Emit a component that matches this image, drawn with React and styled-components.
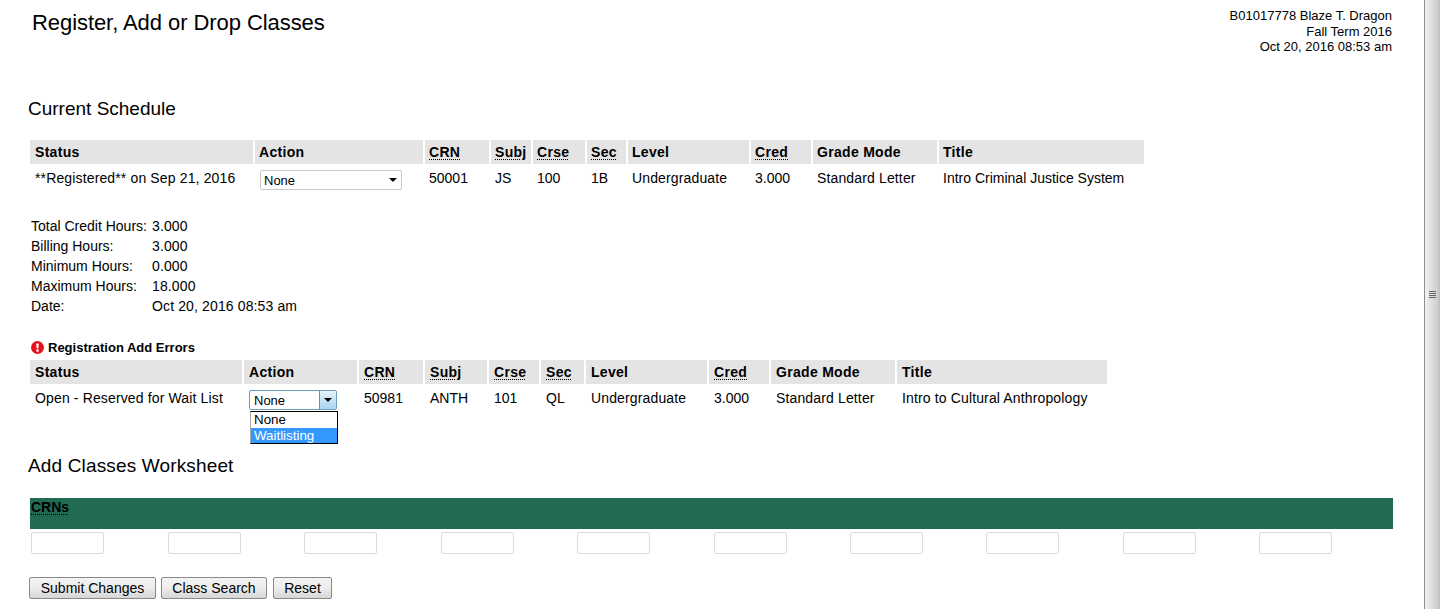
import React from "react";
import styled, { createGlobalStyle } from "styled-components";

const Global = createGlobalStyle`
  html, body { margin: 0; padding: 0; height: 609px; overflow: hidden; background: #fff; }
  body { font-family: "Liberation Sans", Arial, sans-serif; font-size: 14px; color: #000; }
`;
const Shell = styled.div`display: flex; width: 1440px; height: 609px; overflow: hidden;`;
const Content = styled.main`width: 1424px; flex: none; padding-left: 30px; box-sizing: border-box;`;
const TopRow = styled.header`display: flex; justify-content: space-between; height: 99px; padding-right: 32px;`;
const PageTitle = styled.h1`margin: 11px 0 0 2px; font-size: 22px; line-height: 24px; font-weight: 400; letter-spacing: -.07px;`;
const Identity = styled.div`margin-top: 8px; font-size: 13px; line-height: 15.5px; text-align: right;`;
const SectionTitle = styled.h2`margin: 0 0 21px -2px; font-size: 19px; line-height: 20px; font-weight: 400;`;
const Row = styled.div`
  display: grid; grid-template-columns: ${p => p.$cols}; column-gap: 2px; width: ${p => p.$width}px;
  & > * { padding-left: ${p => p.$pad}px; }
  & > :first-child { padding-left: 5px; }
`;
const Head = styled.div`height: 24px; background: #e4e4e4; font-weight: 700; line-height: 24px; letter-spacing: .3px; box-sizing: border-box;`;
const Abbr = styled.abbr`text-decoration: underline dotted #000; text-decoration-thickness: 1px; text-underline-offset: 2px;`;
const Cell = styled.div`height: 28px; line-height: 28px; box-sizing: border-box; white-space: nowrap; position: relative; ${p => p.$wide && "letter-spacing: .14px;"}`;
const Select = styled.div`
  position: relative; width: ${p => p.$w}px; height: 20px; margin: 6px 0 0 ${p => p.$ml}px; box-sizing: border-box;
  border: 1px solid ${p => p.$open ? "#6d9dbf" : "#c9c9c9"}; border-radius: 2px; background: #fff;
  font-size: 13px; line-height: 20px; padding-left: ${p => p.$open ? 4 : 3}px;
`;
const ArrowBox = styled.span`
  position: absolute; right: 0; top: 0; bottom: 0; width: 16px; display: flex; align-items: center; justify-content: center;
  ${p => p.$open && "background: linear-gradient(#e6f3fb, #a7d5ef); border-left: 1px solid #5e8fb3;"}
`;
const Arrow = styled.i`display: block; width: 0; height: 0; border: 4px solid transparent; border-top-color: #000; border-bottom: 0;`;
const Menu = styled.div`
  position: absolute; left: 0; top: 20px; width: 88px; height: 33px; background: #fff; border: 1px solid #000; border-left-color: #a9a9a9;
  box-sizing: border-box; font-size: 13.33px; line-height: 16px; z-index: 2; overflow: hidden;
`;
const MenuItem = styled.div`height: 16px; padding-left: 3px; ${p => p.$active && "background: #3399ff; color: #fff;"}`;
const Summary = styled.dl`display: grid; grid-template-columns: 121px auto; justify-content: start; margin: 24px 0 0 1px; line-height: 20px;`;
const Term = styled.dt`margin: 0;`;
const Desc = styled.dd`margin: 0; letter-spacing: .13px;`;
const ErrorTitle = styled.div`display: flex; align-items: center; gap: 4px; height: 20px; margin: 21px 0 3px 1px; font-size: 13px; font-weight: 700;`;
const WorksheetTitle = styled(SectionTitle)`margin-top: 44px; margin-bottom: 22px; letter-spacing: .15px;`;
const GreenBar = styled.div`
  width: 1363px; height: 31px; background: #206b52; padding-left: 1px; box-sizing: border-box;
  font-weight: 700; line-height: 18px; color: #000;
`;
const Inputs = styled.div`display: grid; grid-template-columns: repeat(10, 136.47px); margin: 3px 0 0 1.2px;`;
const Input = styled.div`width: 73px; height: 22px; box-sizing: border-box; border: 1px solid #dcdcdc; border-radius: 2px; background: #fff;`;
const Buttons = styled.div`display: flex; gap: 5px; margin: 23px 0 0 -1px;`;
const Button = styled.button`
  height: 22px; padding: 0; width: ${p => p.$w}px; margin-left: ${p => p.$ml || 0}px; box-sizing: border-box; border: 1px solid #8a8a8a; border-radius: 2px;
  background: linear-gradient(#f4f4f4, #ececec 50%, #d6d6d6); font: 14px "Liberation Sans", Arial, sans-serif; color: #000;
`;
const Scrollbar = styled.aside`
  width: 16px; height: 609px; flex: none; box-sizing: border-box; border-left: 1px solid #8d8d8d; border-right: 1px solid #bdbdbd;
  background: linear-gradient(90deg, #f2f2f2, #dcdcdc 55%, #c9c9c9); display: flex; flex-direction: column; align-items: center; justify-content: center; gap: 1px;
  padding-bottom: 21px;
`;
const Grip = styled.i`display: block; width: 7px; height: 1px; background: #666;`;

const heads = ["Status", "Action", "CRN", "Subj", "Crse", "Sec", "Level", "Cred", "Grade Mode", "Title"];
const abbreviated = new Set(["CRN", "Subj", "Crse", "Sec", "Cred"]);

function HeadRow({ cols, width, pad }) {
  return (
    <Row $cols={cols} $width={width} $pad={pad}>
      {heads.map(h => <Head key={h}>{abbreviated.has(h) ? <Abbr>{h}</Abbr> : h}</Head>)}
    </Row>
  );
}

const ErrorIcon = () => (
  <svg width="13" height="13" viewBox="0 0 13 13" aria-hidden="true">
    <circle cx="6.5" cy="6.5" r="6.5" fill="#e8101a" />
    <path d="M5.1 2.6h2.8L7.3 7.6H5.7z" fill="#fff" />
    <circle cx="6.5" cy="9.6" r="1.3" fill="#fff" />
  </svg>
);

const cols1 = "223px 168px 64px 40px 52px 39px 121px 60px 124px 205px";
const cols2 = "212px 113px 64px 62px 50px 43px 121px 60px 124px 210px";

export default function App() {
  return (
    <Shell>
      <Global />
      <Content>
        <TopRow>
          <PageTitle>Register, Add or Drop Classes</PageTitle>
          <Identity>
            <div>B01017778 Blaze T. Dragon</div>
            <div>Fall Term 2016</div>
            <div>Oct 20, 2016 08:53 am</div>
          </Identity>
        </TopRow>
        <SectionTitle>Current Schedule</SectionTitle>
        <HeadRow cols={cols1} width={1114} pad={4} />
        <Row $cols={cols1} $width={1114} $pad={4}>
          <Cell $wide>**Registered** on Sep 21, 2016</Cell>
          <Cell><Select $w={142} $ml={1}>None<ArrowBox><Arrow /></ArrowBox></Select></Cell>
          <Cell>50001</Cell><Cell>JS</Cell><Cell>100</Cell><Cell>1B</Cell>
          <Cell $wide>Undergraduate</Cell><Cell>3.000</Cell><Cell $wide>Standard Letter</Cell><Cell>Intro Criminal Justice System</Cell>
        </Row>
        <Summary>
          <Term>Total Credit Hours:</Term><Desc>3.000</Desc>
          <Term>Billing Hours:</Term><Desc>3.000</Desc>
          <Term>Minimum Hours:</Term><Desc>0.000</Desc>
          <Term>Maximum Hours:</Term><Desc>18.000</Desc>
          <Term>Date:</Term><Desc>Oct 20, 2016 08:53 am</Desc>
        </Summary>
        <ErrorTitle><ErrorIcon />Registration Add Errors</ErrorTitle>
        <HeadRow cols={cols2} width={1077} pad={5} />
        <Row $cols={cols2} $width={1077} $pad={5}>
          <Cell $wide>Open - Reserved for Wait List</Cell>
          <Cell>
            <Select $w={88} $ml={0} $open>
              None<ArrowBox $open><Arrow /></ArrowBox>
              <Menu><MenuItem>None</MenuItem><MenuItem $active>Waitlisting</MenuItem></Menu>
            </Select>
          </Cell>
          <Cell>50981</Cell><Cell>ANTH</Cell><Cell>101</Cell><Cell>QL</Cell>
          <Cell $wide>Undergraduate</Cell><Cell>3.000</Cell><Cell $wide>Standard Letter</Cell><Cell $wide>Intro to Cultural Anthropology</Cell>
        </Row>
        <WorksheetTitle>Add Classes Worksheet</WorksheetTitle>
        <GreenBar><Abbr>CRNs</Abbr></GreenBar>
        <Inputs>{Array.from({ length: 10 }, (_, i) => <Input key={i} />)}</Inputs>
        <Buttons>
          <Button $w={127}>Submit Changes</Button>
          <Button $w={106}>Class Search</Button>
          <Button $w={59} $ml={1}>Reset</Button>
        </Buttons>
      </Content>
      <Scrollbar><Grip /><Grip /><Grip /><Grip /></Scrollbar>
    </Shell>
  );
}
